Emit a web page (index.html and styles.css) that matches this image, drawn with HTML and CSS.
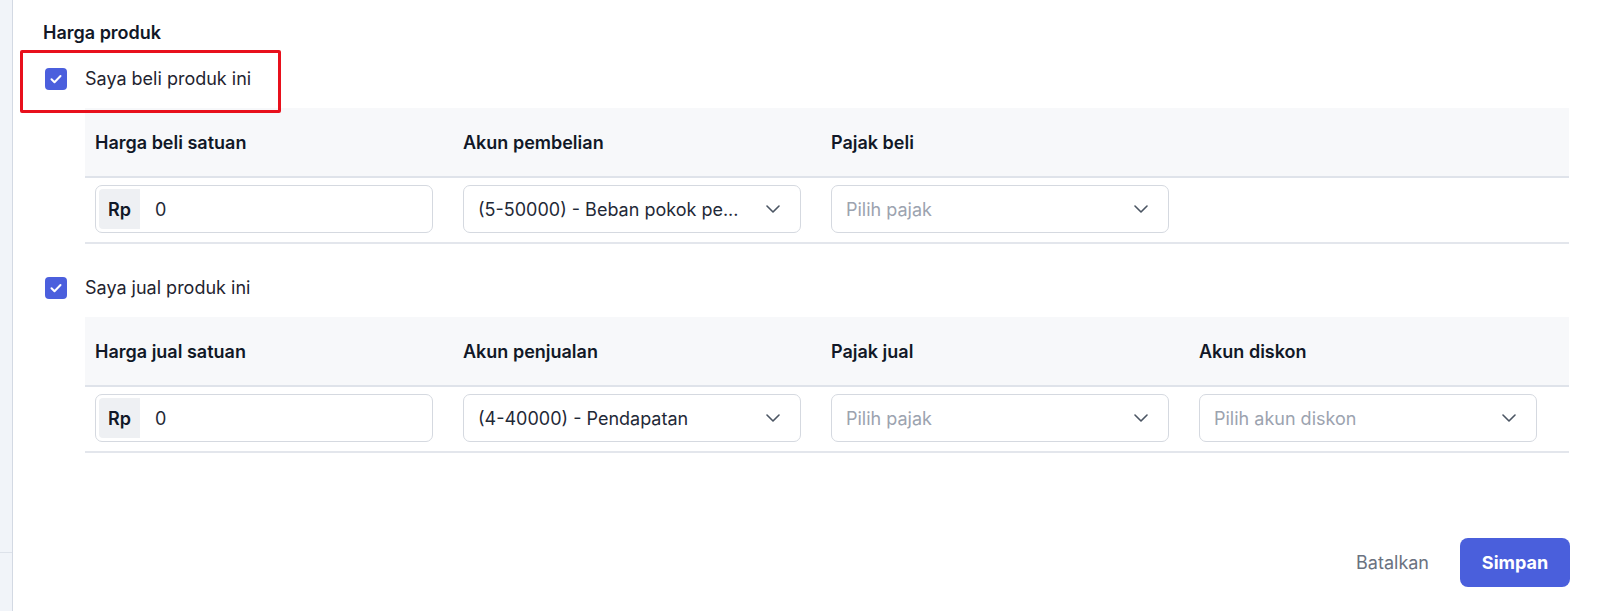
FILE: index.html
```html
<!DOCTYPE html>
<html lang="id">
<head>
<meta charset="utf-8">
<title>Harga produk</title>
<link rel="stylesheet" href="styles.css">
</head>
<body>
<div class="layout">
  <aside class="sidebar"><div class="sidebar-top"></div><div class="sidebar-bottom"></div></aside>
  <main class="main">
    <h2 class="title">Harga produk</h2>

    <div class="check-row annotated">
      <span class="checkbox"><svg viewBox="0 0 22 22" width="22" height="22"><path d="M6.5 11.2l3 3 6-6.2" fill="none" stroke="#fff" stroke-width="2" stroke-linecap="round" stroke-linejoin="round"/></svg></span>
      <span class="check-label">Saya beli produk ini</span>
      <span class="highlight"></span>
    </div>

    <div class="table">
      <div class="thead">
        <div class="th">Harga beli satuan</div>
        <div class="th">Akun pembelian</div>
        <div class="th">Pajak beli</div>
        <div class="th"></div>
      </div>
      <div class="trow">
        <div class="td"><div class="input"><span class="prefix">Rp</span><span class="value">0</span></div></div>
        <div class="td"><div class="select"><span class="sel-text">(5-50000) - Beban pokok pe...</span><svg class="chev" viewBox="0 0 14 8" width="14" height="8"><path d="M1 1l6 6 6-6" fill="none" stroke="#4b5563" stroke-width="1.6" stroke-linecap="round" stroke-linejoin="round"/></svg></div></div>
        <div class="td"><div class="select"><span class="sel-text placeholder">Pilih pajak</span><svg class="chev" viewBox="0 0 14 8" width="14" height="8"><path d="M1 1l6 6 6-6" fill="none" stroke="#4b5563" stroke-width="1.6" stroke-linecap="round" stroke-linejoin="round"/></svg></div></div>
        <div class="td"></div>
      </div>
    </div>

    <div class="check-row second">
      <span class="checkbox"><svg viewBox="0 0 22 22" width="22" height="22"><path d="M6.5 11.2l3 3 6-6.2" fill="none" stroke="#fff" stroke-width="2" stroke-linecap="round" stroke-linejoin="round"/></svg></span>
      <span class="check-label">Saya jual produk ini</span>
    </div>

    <div class="table">
      <div class="thead">
        <div class="th">Harga jual satuan</div>
        <div class="th">Akun penjualan</div>
        <div class="th">Pajak jual</div>
        <div class="th">Akun diskon</div>
      </div>
      <div class="trow">
        <div class="td"><div class="input"><span class="prefix">Rp</span><span class="value">0</span></div></div>
        <div class="td"><div class="select"><span class="sel-text">(4-40000) - Pendapatan</span><svg class="chev" viewBox="0 0 14 8" width="14" height="8"><path d="M1 1l6 6 6-6" fill="none" stroke="#4b5563" stroke-width="1.6" stroke-linecap="round" stroke-linejoin="round"/></svg></div></div>
        <div class="td"><div class="select"><span class="sel-text placeholder">Pilih pajak</span><svg class="chev" viewBox="0 0 14 8" width="14" height="8"><path d="M1 1l6 6 6-6" fill="none" stroke="#4b5563" stroke-width="1.6" stroke-linecap="round" stroke-linejoin="round"/></svg></div></div>
        <div class="td"><div class="select"><span class="sel-text placeholder">Pilih akun diskon</span><svg class="chev" viewBox="0 0 14 8" width="14" height="8"><path d="M1 1l6 6 6-6" fill="none" stroke="#4b5563" stroke-width="1.6" stroke-linecap="round" stroke-linejoin="round"/></svg></div></div>
      </div>
    </div>

    <div class="actions">
      <button class="btn-cancel">Batalkan</button>
      <button class="btn-save">Simpan</button>
    </div>
  </main>
</div>
</body>
</html>
```

FILE: styles.css
```css
* { box-sizing: border-box; }
html, body { margin: 0; padding: 0; background: #fff; }
body {
  font-family: Inter, "Noto Sans", "Liberation Sans", sans-serif;
  font-size: 18px;
  color: #1f2937;
  width: 1600px;
  height: 611px;
  overflow: hidden;
}
.layout { display: flex; height: 611px; }
.sidebar {
  width: 13px;
  flex: none;
  display: flex;
  flex-direction: column;
  border-right: 1px solid #d3d9e3;
}
.sidebar-top { height: 553px; background: #f1f4f9; border-bottom: 1px solid #dde2ea; }
.sidebar-bottom { flex: 1; background: #f1f4f9; }
.main {
  flex: 1;
  padding: 21px 0 0 30px;
  display: flex;
  flex-direction: column;
}
.title {
  margin: 0;
  font-size: 18px;
  font-weight: 600;
  color: #111827;
  line-height: 24px;
}
.check-row {
  display: flex;
  align-items: center;
  gap: 18px;
  height: 22px;
  margin-left: 2px;
  position: relative;
}
.annotated { margin-top: 23px; }
.second { margin-top: 33px; }
.checkbox {
  width: 22px;
  height: 22px;
  border-radius: 4px;
  background: #4b5fdd;
  display: flex;
}
.check-label { color: #1f2430; font-size: 18px; line-height: 22px; }
.highlight {
  position: absolute;
  left: -25px;
  top: -18px;
  width: 261px;
  height: 63px;
  border: 3px solid #e8101c;
  border-radius: 2px;
  pointer-events: none;
}
.table {
  margin-left: 42px;
  width: 1484px;
}
.annotated + .table { margin-top: 18px; }
.second + .table { margin-top: 18px; }
.thead, .trow {
  display: grid;
  grid-template-columns: 368px 368px 368px 368px;
}
.thead {
  background: #f7f8fa;
  height: 70px;
  border-bottom: 2px solid #dfe3ea;
  align-items: center;
}
.th {
  padding-left: 10px;
  font-weight: 600;
  color: #111827;
  font-size: 18px;
}
.trow {
  padding: 7px 0 9px;
  border-bottom: 2px solid #e3e6ec;
}
.td { padding-left: 10px; }
.input, .select {
  width: 338px;
  height: 48px;
  border: 1px solid #d5d9e0;
  border-radius: 7px;
  background: #fff;
  display: flex;
  align-items: center;
}
.input { padding: 3px; }
.prefix {
  width: 41px;
  height: 100%;
  background: #eef0f3;
  border-radius: 4px 0 0 4px;
  display: flex;
  align-items: center;
  justify-content: center;
  font-weight: 600;
  color: #111827;
}
.value { margin-left: 15px; color: #1f2937; }
.select { padding: 0 20px 0 14px; justify-content: space-between; }
.sel-text { color: #1f2937; white-space: nowrap; }
.placeholder { color: #9ca3af; }
.chev { flex: none; }
.actions {
  margin-top: 85px;
  display: flex;
  justify-content: flex-end;
  align-items: center;
  gap: 31px;
  padding-right: 30px;
}
.btn-cancel {
  background: none;
  border: none;
  font-family: inherit;
  font-size: 18px;
  color: #6b7280;
  padding: 0;
}
.btn-save {
  width: 110px;
  height: 49px;
  border: none;
  border-radius: 8px;
  background: #4a5fdc;
  color: #fff;
  font-family: inherit;
  font-size: 18px;
  font-weight: 700;
}
```
